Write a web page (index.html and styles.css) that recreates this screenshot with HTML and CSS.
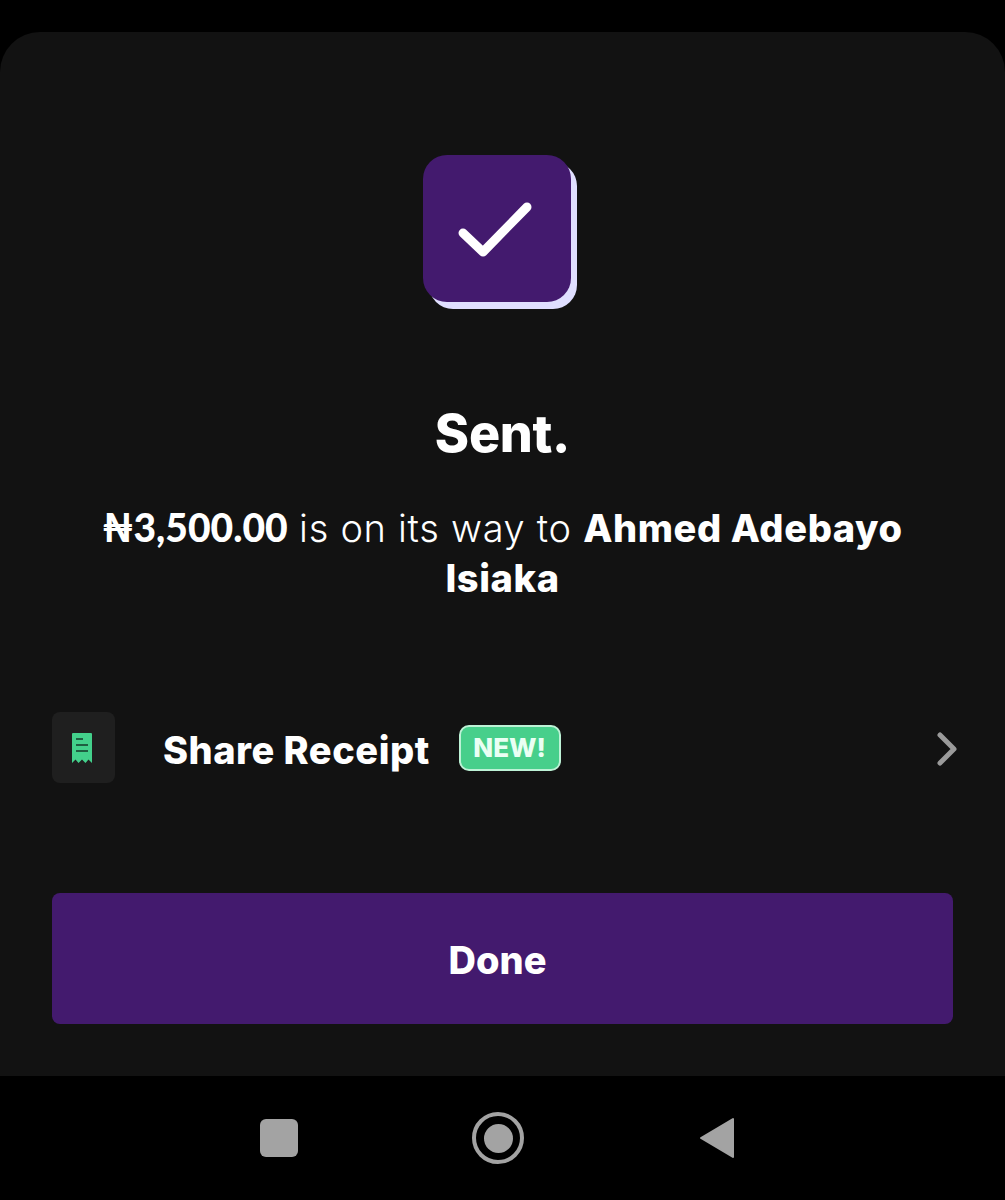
FILE: index.html
```html
<!DOCTYPE html>
<html lang="en">
<head>
    <meta name="viewport" content="width=device-width, initial-scale=1.0">
    <title>Sent</title>
    <link rel="stylesheet" href="styles.css">
</head>
<body>
    <main class="sheet">
        <div class="tick-box">
            <svg width="148" height="147" viewBox="0 0 148 147">
                <path d="M40 78 L60 97 L104 52" fill="none" stroke="#fff" stroke-width="9" stroke-linecap="round" stroke-linejoin="round"/>
            </svg>
        </div>
        <h1 class="title">Sent.</h1>
        <p class="message"><b class="amount">₦3,500.00</b> is on its way to <b>Ahmed Adebayo</b><br><b>Isiaka</b></p>
        <div class="receipt-row">
            <div class="receipt-tile">
                <svg width="20" height="30" viewBox="0 0 20 30">
                    <path d="M0 1 Q0 0 1 0 H19 Q20 0 20 1 V30 L16.500 26.500 L13.500 30 L10 26.500 L6.500 30 L3.500 26.500 L0 30 Z" fill="#43d08b"/>
                    <path d="M4 6 H11 M4 12 H16 M4 18 H16" stroke="#14382a" stroke-width="1.500" fill="none"/>
                </svg>
            </div>
            <span class="receipt-label">Share Receipt</span>
            <span class="badge">NEW!</span>
            <svg class="chevron" width="22" height="34" viewBox="0 0 22 34">
                <path d="M4 3 L18 17 L4 31" fill="none" stroke="#9a9a9a" stroke-width="5" stroke-linecap="round" stroke-linejoin="round"/>
            </svg>
        </div>
        <button class="done" type="button">Done</button>
    </main>
    <nav class="nav-bar">
        <span class="nav-square"></span>
        <span class="nav-home"><span class="nav-dot"></span></span>
        <svg width="36" height="42" viewBox="0 0 36 42">
            <path d="M35 2 V40 L3 21 Z" fill="#a3a3a3" stroke="#a3a3a3" stroke-width="2" stroke-linejoin="round"/>
        </svg>
    </nav>
</body>
</html>
```

FILE: styles.css
```css
body {
    margin: 0;
    padding-top: 32px;
    background: #000;
    color: #fff;
    font-family: "Inter", "Noto Sans", sans-serif;
}
.sheet {
    height: 1044px;
    box-sizing: border-box;
    padding: 123px 52px 0;
    background: #121212;
    border-radius: 40px 40px 0 0;
    display: flex;
    flex-direction: column;
    align-items: center;
}
.tick-box {
    width: 148px;
    height: 147px;
    margin-right: 12px;
    background: #431a6e;
    border-radius: 24px;
    box-shadow: 6px 7px 0 #e0dfff;
}
.tick-box svg {
    display: block;
}
.title {
    margin: 100px 0 0;
    font-size: 52px;
    line-height: 64px;
    font-weight: 800;
    letter-spacing: -0.3px;
}
.message {
    width: 830px;
    margin: 37px 0 0;
    font-size: 38px;
    line-height: 50px;
    font-weight: 300;
    letter-spacing: 0.7px;
    text-align: center;
}
.message b {
    font-weight: 800;
    letter-spacing: 0.6px;
}
.message .amount {
    font-family: "Lato", sans-serif;
    font-size: 39px;
    line-height: 1;
    font-weight: 900;
    letter-spacing: 0;
}
.receipt-row {
    align-self: stretch;
    display: flex;
    align-items: center;
    height: 71px;
    margin-top: 109px;
}
.receipt-tile {
    width: 63px;
    height: 71px;
    box-sizing: border-box;
    padding-right: 3px;
    background: #1f1f1f;
    border-radius: 8px;
    display: flex;
    align-items: center;
    justify-content: center;
}
.receipt-label {
    margin-left: 48px;
    padding-top: 4px;
    font-size: 38px;
    font-weight: 800;
    letter-spacing: 0.5px;
}
.badge {
    margin-left: 29px;
    width: 102px;
    height: 46px;
    box-sizing: border-box;
    border: 2px solid #bdf2d6;
    border-radius: 10px;
    background: #47cf8b;
    font-size: 26px;
    font-weight: 800;
    line-height: 42px;
    text-align: center;
    color: #eafff4;
}
.chevron {
    margin-left: auto;
    margin-right: -5px;
    margin-top: 3px;
}
.done {
    align-self: stretch;
    height: 131px;
    margin-top: 110px;
    padding: 2px 10px 0 0;
    border: 0;
    border-radius: 8px;
    background: #431a6e;
    color: #fff;
    font-family: inherit;
    font-size: 38px;
    font-weight: 800;
}
.nav-bar {
    height: 124px;
    background: #000;
    display: flex;
    align-items: center;
    justify-content: center;
    gap: 174px;
    padding-right: 11px;
}
.nav-square {
    width: 38px;
    height: 38px;
    background: #a3a3a3;
    border-radius: 6px;
}
.nav-home {
    width: 52px;
    height: 52px;
    box-sizing: border-box;
    border: 4px solid #a3a3a3;
    border-radius: 50%;
    display: flex;
    align-items: center;
    justify-content: center;
}
.nav-dot {
    width: 29px;
    height: 29px;
    background: #a3a3a3;
    border-radius: 50%;
}
```
